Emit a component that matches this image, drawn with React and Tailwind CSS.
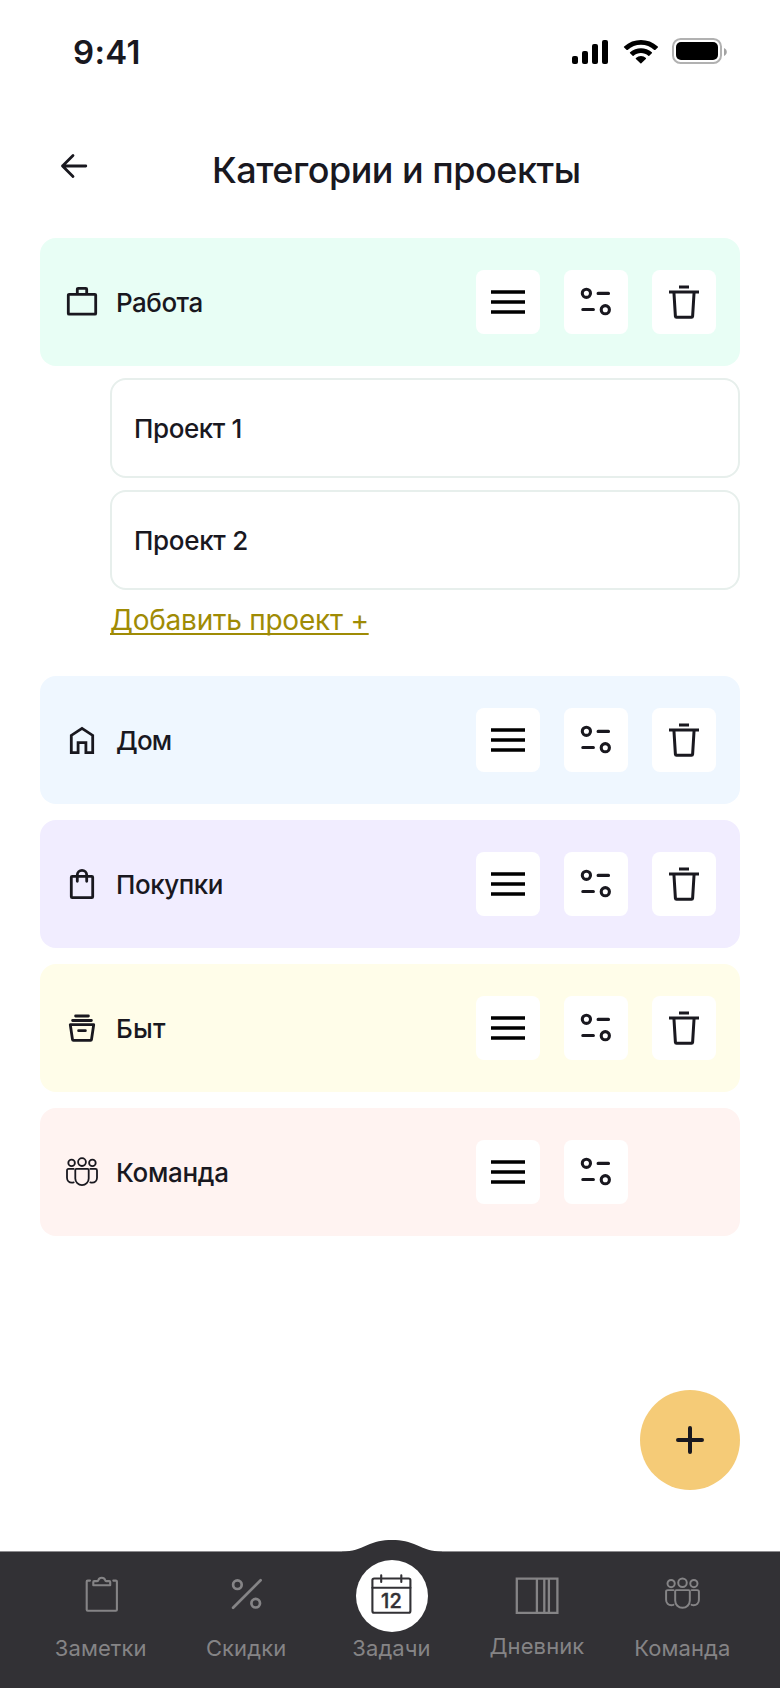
import React from "react";

const INK = "#19181f";

function StatusIcons() {
  return (
    <svg width="156" height="28" viewBox="572 38 156 28" fill="#000" className="block">
      <rect x="572" y="56" width="6" height="8" rx="2" />
      <rect x="582" y="51" width="6" height="13" rx="2" />
      <rect x="592" y="44" width="6" height="20" rx="2" />
      <rect x="602" y="40" width="6" height="24" rx="2" />
      <g transform="translate(623.9 40) scale(1.99 1.97)">
        <path d="M8.571 2.466c2.487 0 4.879.922 6.681 2.575.136.128.353.126.486-.004l1.297-1.262a.335.335 0 0 0-.003-.494c-4.727-4.374-12.195-4.374-16.922 0a.335.335 0 0 0-.004.494l1.297 1.262c.134.13.351.132.487.004 1.802-1.653 4.194-2.575 6.681-2.575Z" />
        <path d="M8.571 6.572c1.366 0 2.684.5 3.697 1.403.137.128.351.126.485-.006l1.295-1.262a.34.34 0 0 0-.005-.497c-3.083-2.751-7.857-2.751-10.94 0a.34.34 0 0 0-.005.497l1.295 1.262c.134.13.348.133.485.005 1.012-.902 2.328-1.402 3.693-1.402Z" />
        <path d="M11.109 9.335a.33.33 0 0 1-.103.25l-2.24 2.18a.344.344 0 0 1-.486 0L6.04 9.585a.33.33 0 0 1 .009-.496 3.9 3.9 0 0 1 5.048 0c.07.064.01.153.012.246Z" />
      </g>
      <rect x="673" y="39" width="48" height="24" rx="7.6" fill="none" stroke="#b1b1b1" strokeWidth="2" />
      <rect x="676" y="42" width="42" height="18" rx="5" />
      <path d="M724 48v8c1.7-.7 2.8-2.300 2.800-4s-1.100-3.300-2.800-4Z" fill="#a3a3a3" />
    </svg>
  );
}

function BackArrow() {
  return (
    <svg width="32" height="32" viewBox="0 0 32 32" fill="none" stroke={INK} strokeWidth="2.800" strokeLinecap="round" strokeLinejoin="round" className="block">
      <path d="M27.800 16H4.500M15 5.600 4.500 16l10.500 10.600" />
    </svg>
  );
}

const iconProps = {
  width: 32,
  height: 32,
  viewBox: "0 0 32 32",
  fill: "none",
  stroke: INK,
  strokeWidth: 2.8,
  className: "block shrink-0",
};

function BriefcaseIcon() {
  return (
    <svg {...iconProps} strokeLinejoin="round">
      <rect x="2.300" y="8.300" width="27.400" height="19.900" rx=".8" />
      <path d="M11.300 8.300V3.200q0-.9.900-.9h7.600q.9 0 .9.900v5.100" />
    </svg>
  );
}

function HomeIcon() {
  return (
    <svg {...iconProps}>
      <path d="M5.300 28.700V11.400L16 4.400l10.700 7v17.300h-6.800V18.700h-7.800v10Z" />
    </svg>
  );
}

function BagIcon() {
  return (
    <svg {...iconProps} strokeLinecap="round" strokeLinejoin="round">
      <rect x="5.300" y="8.300" width="21.400" height="21.400" rx=".9" />
      <path d="M11.300 13.300V7a4.700 4.700 0 0 1 9.400 0v6.300" />
    </svg>
  );
}

function BasketIcon() {
  return (
    <svg {...iconProps} strokeLinecap="round" strokeLinejoin="round">
      <path d="M9.600 4h12.800M6.600 8.500h18.800M4.300 12.700h23.400l-2.200 14.800q-.1.800-.9.800H7.400q-.8 0-.9-.8ZM12.600 18.700h6.800" />
    </svg>
  );
}

function TeamIcon({ size = 32, color = INK }) {
  return (
    <svg width={size} height={size} viewBox="0 0 32 32" fill="none" stroke={color} strokeWidth="1.800" strokeLinecap="round" strokeLinejoin="round" className="block shrink-0">
      <circle cx="5.600" cy="6.900" r="3.300" />
      <circle cx="16" cy="6.100" r="3.900" />
      <circle cx="26.400" cy="6.900" r="3.300" />
      <path d="M10.400 12.900h11.200q1.100 0 1.100 1.100v8.400a6.700 6.700 0 0 1-13.400 0V14q0-1.100 1.100-1.100Z" />
      <path d="M7.700 12.900H2.500q-1.500 0-1.500 1.500v7.300c0 3 2.200 5 4.900 5 .7 0 1.200-.1 1.800-.3" />
      <path d="M24.300 12.900h5.200q1.500 0 1.500 1.500v7.300c0 3-2.200 5-4.900 5-.7 0-1.200-.1-1.800-.3" />
    </svg>
  );
}

function IconButton({ label, children }) {
  return (
    <button aria-label={label} className="size-16 rounded-lg bg-white">
      {children}
    </button>
  );
}

function MenuIcon() {
  return (
    <svg width="64" height="64" fill="none" stroke="#000" strokeWidth="3.3" className="block">
      <path d="M15 22h34M15 32h34M15 42h34" />
    </svg>
  );
}

function SlidersIcon() {
  return (
    <svg width="64" height="64" fill="none" stroke={INK} strokeWidth="3.1" strokeLinecap="round" className="block">
      <circle cx="22.400" cy="23.300" r="4.100" />
      <circle cx="41.300" cy="39.700" r="4.100" />
      <path d="M34.100 23.400h10.400M18.800 39.500h10.600" />
    </svg>
  );
}

function TrashIcon() {
  return (
    <svg width="64" height="64" fill="none" stroke={INK} strokeWidth="3" strokeLinejoin="round" className="block">
      <path d="M27 17h10M17 22h30" />
      <path d="m21.900 22 1.500 24.300q.1 1 1.100 1h15q1 0 1.100-1L42.100 22" />
    </svg>
  );
}

function CategoryRow({ bg, icon: Icon, name, nameClass = "tracking-[-0.3px]", removable = true }) {
  return (
    <div className={"flex h-32 items-center rounded-2xl pl-[26px] pr-6 " + bg}>
      <Icon />
      <span className={"ml-[18px] flex-1 pt-0.5 text-[26px] font-medium leading-8 " + nameClass}>{name}</span>
      <div className="flex w-60 gap-6">
        <IconButton label="Порядок"><MenuIcon /></IconButton>
        <IconButton label="Настройки"><SlidersIcon /></IconButton>
        {removable && <IconButton label="Удалить"><TrashIcon /></IconButton>}
      </div>
    </div>
  );
}

function Project({ name, className }) {
  return (
    <div className="flex h-[100px] items-center rounded-2xl border-2 border-[#e7efec] pl-[22px]">
      <span className={"pt-0.5 text-[26px] font-medium leading-8 " + className}>{name}</span>
    </div>
  );
}

const GREY = "#858486";

function NotesIcon() {
  return (
    <svg width="60" height="72" viewBox="0 0 60 72" fill="none" stroke={GREY} strokeWidth="2.1" strokeLinecap="round" strokeLinejoin="round" className="block">
      <path d="M19 20.600h-2.300q-1 0-1 1v28.100q0 1 1 1h28.200q1 0 1-1V21.600q0-1-1-1h-2.600" />
      <path d="M22.300 25.200v-3.200q0-.9.900-.9h3.100q.8 0 1-.8a3.600 3.600 0 0 1 6.900 0q.2.800 1 .8h3.100q.9 0 .9.900v3.200Z" />
    </svg>
  );
}

function PercentIcon() {
  return (
    <svg width="60" height="72" viewBox="0 0 60 72" fill="none" stroke={GREY} strokeWidth="2.700" strokeLinecap="round" className="block">
      <path d="M17.100 47.800 44.600 20.300" />
      <circle cx="21.400" cy="24.700" r="4.300" />
      <circle cx="39.700" cy="43.200" r="4.300" />
    </svg>
  );
}

function CalendarIcon() {
  return (
    <div className="size-[72px] rounded-full bg-white">
      <svg width="72" height="72" viewBox="0 0 72 72" fill="none" stroke="#323135" strokeWidth="2.1" strokeLinecap="round" className="block">
        <rect x="16.400" y="18.500" width="38" height="34.300" rx="1.800" />
        <path d="M16.400 27.800h38M25.200 15.200v6.800M45.300 15.200v6.800" />
        <text x="35.600" y="47.700" textAnchor="middle" fontSize="20" fontWeight="500" letterSpacing=".4" strokeWidth=".4" fill="#323135">12</text>
      </svg>
    </div>
  );
}

function DiaryIcon() {
  return (
    <svg width="60" height="72" viewBox="0 0 60 72" fill="none" stroke={GREY} strokeWidth="2.300" className="block">
      <path d="M9.800 18.700h40.600v34.200H9.800ZM29.900 18.700v34.200M37.300 18.700v34.200M41.900 18.700v34.200" />
    </svg>
  );
}

function NavTeamIcon() {
  return (
    <div className="flex h-[72px] w-[60px] justify-center pt-4">
      <TeamIcon size={35} color={GREY} />
    </div>
  );
}

function NavItem({ label, icon: Icon, shift = "" }) {
  return (
    <div className="flex flex-1 flex-col items-center">
      <Icon />
      <span className={"text-[22px] leading-8 tracking-[0.1px] " + shift}>{label}</span>
    </div>
  );
}

export default function App() {
  return (
    <div className="flex h-[1688px] w-[780px] flex-col bg-white font-['Inter','Liberation_Sans',sans-serif] text-[#19181f]">
      <header className="flex items-center justify-between pl-[73px] pr-[52px] pt-9">
        <span className="text-[33px] font-semibold leading-8 tracking-[0.3px]">9:41</span>
        <StatusIcons />
      </header>
      <div className="mt-[82px] flex h-10 pl-[58px]">
        <BackArrow />
        <h1 className="ml-[122px] text-[36px] font-medium leading-10 tracking-[-0.5px]">Категории и проекты</h1>
      </div>
      <main className="mt-12 flex flex-col px-10">
        <CategoryRow bg="bg-[#e8fef5]" icon={BriefcaseIcon} name="Работа" nameClass="tracking-[-0.5px]" />
        <div className="ml-[70px] mt-3 flex flex-col gap-3">
          <Project name="Проект 1" className="tracking-[-0.4px]" />
          <Project name="Проект 2" className="tracking-[-0.3px]" />
        </div>
        <a className="ml-[70px] mt-[14px] self-start text-[28px] leading-8 tracking-[-0.24px] text-[#9f8b05] underline decoration-2 underline-offset-[3px] [text-decoration-skip-ink:none]">
          Добавить проект +
        </a>
        <div className="mt-10 flex flex-col gap-4">
          <CategoryRow bg="bg-[#eff7ff]" icon={HomeIcon} name="Дом" nameClass="tracking-[-0.8px]" />
          <CategoryRow bg="bg-[#f1edff]" icon={BagIcon} name="Покупки" nameClass="tracking-[-0.45px]" />
          <CategoryRow bg="bg-[#fffde9]" icon={BasketIcon} name="Быт" nameClass="tracking-[0.2px]" />
          <CategoryRow bg="bg-[#fff3f1]" icon={TeamIcon} name="Команда" removable={false} />
        </div>
      </main>
      <div className="mt-auto flex justify-end pr-10">
        <button aria-label="Добавить" className="flex size-[100px] items-center justify-center rounded-full bg-[#f5cb77]">
          <svg width="32" height="32" fill="none" stroke={INK} strokeWidth="4" strokeLinecap="round">
            <path d="M16 4v24M4 16h24" />
          </svg>
        </button>
      </div>
      <nav className="relative mt-[61px] h-[137px] shrink-0 border-t border-[#8d8c8f] bg-[#323135] text-[#858486]">
        <svg width="110" height="14" viewBox="0 0 110 14" className="absolute -top-[12px] left-[337px]">
          <path d="M5 14V11.700C16 11.500 22 8.800 30 5.300 38 1.800 45 0 55 0s17 1.800 25 5.300c8 3.500 14 6.200 25 6.400V14Z" fill="#323135" />
        </svg>
        <div className="relative flex pl-[28px] pr-[25px] pt-2">
          <NavItem label="Заметки" icon={NotesIcon} />
          <NavItem label="Скидки" icon={PercentIcon} />
          <NavItem label="Задачи" icon={CalendarIcon} />
          <NavItem label="Дневник" icon={DiaryIcon} shift="-mt-0.5" />
          <NavItem label="Команда" icon={NavTeamIcon} />
        </div>
      </nav>
    </div>
  );
}
